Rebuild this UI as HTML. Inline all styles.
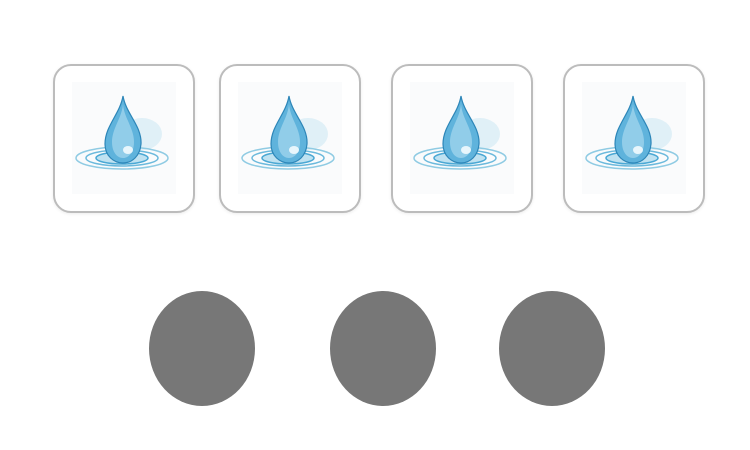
<!DOCTYPE html>
<html><head><style>
body{margin:0;width:750px;height:450px;background:#fff;position:relative;overflow:hidden}
.c{position:absolute;top:64px;width:138px;height:145px;border:2px solid #bcbcbc;border-radius:18px;background:#fff;box-shadow:0 1px 3px rgba(0,0,0,.08)}
.c svg{position:absolute;left:17px;top:16px}
.o{position:absolute;top:291px;width:106px;height:115px;border-radius:50%;background:#777}
</style></head><body>
<svg width="0" height="0" style="position:absolute"><defs>
<symbol id="d" viewBox="0 0 104 112">
<rect width="104" height="112" fill="#fafbfc"/>
<ellipse cx="70" cy="52" rx="20" ry="16" fill="#cfe9f3" opacity=".6"/>
<ellipse cx="50" cy="76" rx="46" ry="11" fill="none" stroke="#8fcbe3" stroke-width="1.5"/>
<ellipse cx="50" cy="76" rx="36" ry="8" fill="none" stroke="#6bb9dc" stroke-width="1.5"/>
<ellipse cx="50" cy="76" rx="26" ry="6" fill="#bfe2f1" stroke="#4aa8d4" stroke-width="1.5"/>
<path d="M51 14 C54 32 70 44 69 62 C68 74 60 81 51 81 C42 81 33 74 33 62 C33 44 48 32 51 14Z" fill="#5fb3dc" stroke="#2d86b8" stroke-width="1.2"/>
<path d="M51 22 C52 36 62 46 62 60 C62 70 57 76 51 76 C45 76 40 70 40 60 C40 46 50 36 51 22Z" fill="#9dd3ec" opacity=".8"/>
<ellipse cx="56" cy="68" rx="5" ry="4" fill="#e8f6fc"/>
</symbol></defs></svg>
<div class="c" style="left:53px"><svg width="104" height="112"><use href="#d"/></svg></div>
<div class="c" style="left:219px"><svg width="104" height="112"><use href="#d"/></svg></div>
<div class="c" style="left:391px"><svg width="104" height="112"><use href="#d"/></svg></div>
<div class="c" style="left:563px"><svg width="104" height="112"><use href="#d"/></svg></div>
<div class="o" style="left:149px"></div>
<div class="o" style="left:330px"></div>
<div class="o" style="left:499px"></div>
</body></html>
